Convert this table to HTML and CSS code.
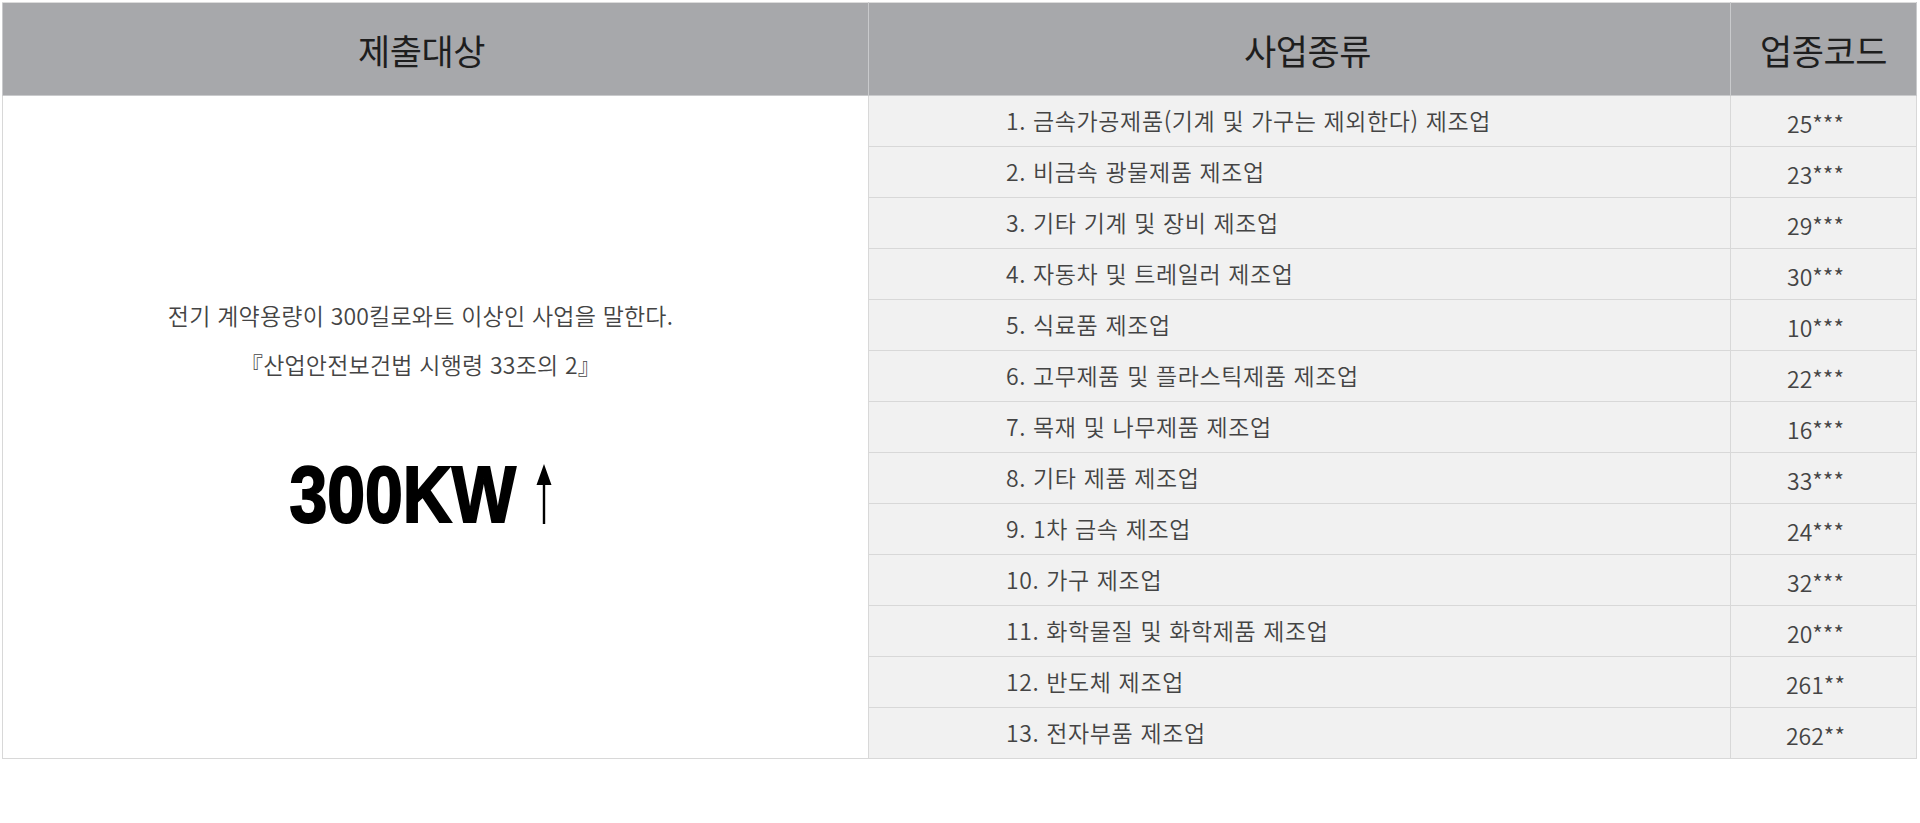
FILE: index.html
```html
<!DOCTYPE html>
<html lang="ko">
<head>
<meta charset="utf-8">
<link rel="stylesheet" href="styles.css">
</head>
<body>
<div class="wrap">
<table class="tbl">
  <colgroup>
    <col class="c1"><col class="c2"><col class="c3">
  </colgroup>
  <thead>
    <tr>
      <th class="h1">제출대상</th>
      <th class="h2">사업종류</th>
      <th class="h3">업종코드</th>
    </tr>
  </thead>
  <tbody>
    <tr>
      <td class="target" rowspan="13">
        <p class="desc">전기 계약용량이 300킬로와트 이상인 사업을 말한다.</p>
        <p class="desc">『산업안전보건법 시행령 33조의 2』</p>
        <p class="big"><span class="kw">300KW</span><svg class="arrow" width="16" height="60" viewBox="0 0 16 60"><path d="M8 0 L15.5 21 L9.2 21 L9.2 60 L6.8 60 L6.8 21 L0.5 21 Z" fill="#000"/></svg></p>
      </td>
      <td class="kind">1. 금속가공제품(기계 및 가구는 제외한다) 제조업</td>
      <td class="code">25***</td>
    </tr>
    <tr><td class="kind">2. 비금속 광물제품 제조업</td><td class="code">23***</td></tr>
    <tr><td class="kind">3. 기타 기계 및 장비 제조업</td><td class="code">29***</td></tr>
    <tr><td class="kind">4. 자동차 및 트레일러 제조업</td><td class="code">30***</td></tr>
    <tr><td class="kind">5. 식료품 제조업</td><td class="code">10***</td></tr>
    <tr><td class="kind">6. 고무제품 및 플라스틱제품 제조업</td><td class="code">22***</td></tr>
    <tr><td class="kind">7. 목재 및 나무제품 제조업</td><td class="code">16***</td></tr>
    <tr><td class="kind">8. 기타 제품 제조업</td><td class="code">33***</td></tr>
    <tr><td class="kind">9. 1차 금속 제조업</td><td class="code">24***</td></tr>
    <tr><td class="kind">10. 가구 제조업</td><td class="code">32***</td></tr>
    <tr><td class="kind">11. 화학물질 및 화학제품 제조업</td><td class="code">20***</td></tr>
    <tr><td class="kind">12. 반도체 제조업</td><td class="code">261**</td></tr>
    <tr><td class="kind">13. 전자부품 제조업</td><td class="code">262**</td></tr>
  </tbody>
</table>
</div>
</body>
</html>
```
FILE: styles.css
```css
html, body {
  margin: 0;
  padding: 0;
  background: #fff;
}
body {
  font-family: "Noto Sans CJK KR", "Noto Sans", sans-serif;
  color: #444;
}
.wrap {
  padding: 2px 4px 0 2px;
}
.tbl {
  width: 1914px;
  border-collapse: collapse;
  table-layout: fixed;
  border: 1px solid #dcdcdc;
}
.c1 { width: 866px; }
.c2 { width: 862px; }
.c3 { width: 186px; }
.tbl th {
  height: 92px;
  padding: 0;
  background: #a7a8ab;
  color: #1e1e1e;
  font-size: 35px;
  font-weight: 400;
  border: 1px solid #c9cacc;
  border-top: 1px solid #dcdcdc;
  letter-spacing: -0.5px;
}
.tbl .h1 { padding-right: 28px; }
.tbl .h2 { padding-left: 16px; }
.tbl td {
  border: 1px solid #d8d8d8;
  padding: 0;
}
.kind, .code {
  height: 51px;
  background: #f1f1f1;
  font-size: 23px;
  font-weight: 350;
  line-height: 1;
  padding-top: 0 !important;
  padding-bottom: 2px !important;
  box-sizing: border-box;
  vertical-align: middle;
}
.kind {
  padding-left: 137px !important;
  text-align: left;
  letter-spacing: 0.6px;
}
.code {
  text-align: center;
  padding-right: 16px !important;
  padding-top: 4px !important;
  padding-bottom: 0 !important;
}
.target {
  background: #fff;
  text-align: center;
  vertical-align: middle;
  padding-right: 30px !important;
  padding-bottom: 29px !important;
}
.desc {
  margin: 0;
  font-size: 23px;
  font-weight: 350;
  line-height: 49px;
  letter-spacing: 0.2px;
  color: #444;
}
.big {
  margin: 66px 0 0 0;
  font-family: "Liberation Sans Narrow", "Liberation Sans", sans-serif;
  font-weight: 700;
  font-size: 79px;
  line-height: 1;
  color: #000;
  display: flex;
  justify-content: center;
  align-items: flex-end;
  gap: 20px;
}
.kw {
  display: inline-block;
  transform: scaleX(0.86);
  margin: 0 -18px;
  -webkit-text-stroke: 2px #000;
}
.arrow {
  display: block;
  margin-bottom: 10px;
}
```
